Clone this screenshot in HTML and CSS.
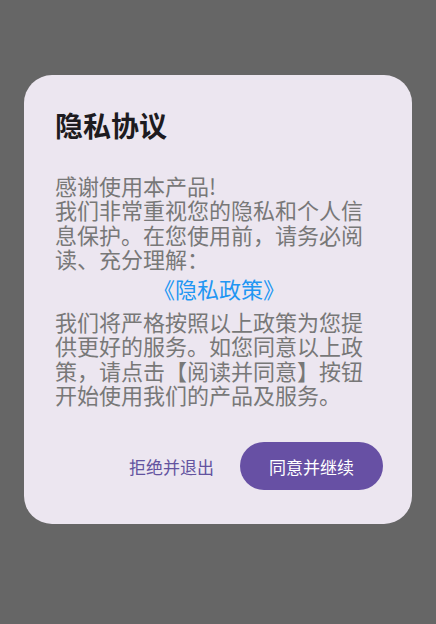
FILE: index.html
```html
<!DOCTYPE html>
<html lang="zh-CN">
<head>
    <meta charset="UTF-8">
    <meta name="viewport" content="width=device-width, initial-scale=1.0">
    <title>隐私协议</title>
    <link rel="stylesheet" href="styles.css">
</head>
<body>
    <div class="dialog">
        <h1 class="dialog-title">隐私协议</h1>
        <div class="dialog-body">
            <p class="dialog-text">感谢使用本产品!<br>我们非常重视您的隐私和个人信息保护。在您使用前，请务必阅读、充分理解：</p>
            <a class="policy-link" href="#">《隐私政策》</a>
            <p class="dialog-text">我们将严格按照以上政策为您提供更好的服务。如您同意以上政策，请点击【阅读并同意】按钮开始使用我们的产品及服务。</p>
        </div>
        <div class="dialog-actions">
            <button class="btn-text">拒绝并退出</button>
            <button class="btn-filled">同意并继续</button>
        </div>
    </div>
</body>
</html>
```

FILE: styles.css
```css
body {
    margin: 0;
    padding: 75px 24px 0;
    height: 624px;
    box-sizing: border-box;
    background-color: #666666;
    font-family: "Noto Sans CJK SC", "Noto Sans", sans-serif;
}
.dialog {
    background: #ece6f0;
    border-radius: 28px;
    padding: 32px 29px 34px 31px;
}
.dialog-title {
    margin: 0;
    font-size: 28px;
    line-height: 36px;
    font-weight: 700;
    color: #1d1b20;
}
.dialog-body {
    margin-top: 30px;
}
.dialog-text {
    margin: 0;
    font-size: 22px;
    line-height: 24.3px;
    color: #787878;
}
.policy-link {
    display: block;
    margin: 5px 0 8px;
    text-align: center;
    font-size: 22px;
    line-height: 26px;
    color: #2196f3;
    text-decoration: none;
}
.dialog-actions {
    display: flex;
    justify-content: flex-end;
    align-items: center;
    gap: 14px;
    margin-top: 36px;
}
.btn-text,
.btn-filled {
    font-family: inherit;
    font-size: 17px;
    height: 48px;
    border: none;
    border-radius: 24px;
    cursor: pointer;
}
.btn-text {
    background: none;
    color: #63539f;
    padding: 0 12px;
}
.btn-filled {
    background: #6750a4;
    color: #ffffff;
    padding: 0 29px;
}
```
